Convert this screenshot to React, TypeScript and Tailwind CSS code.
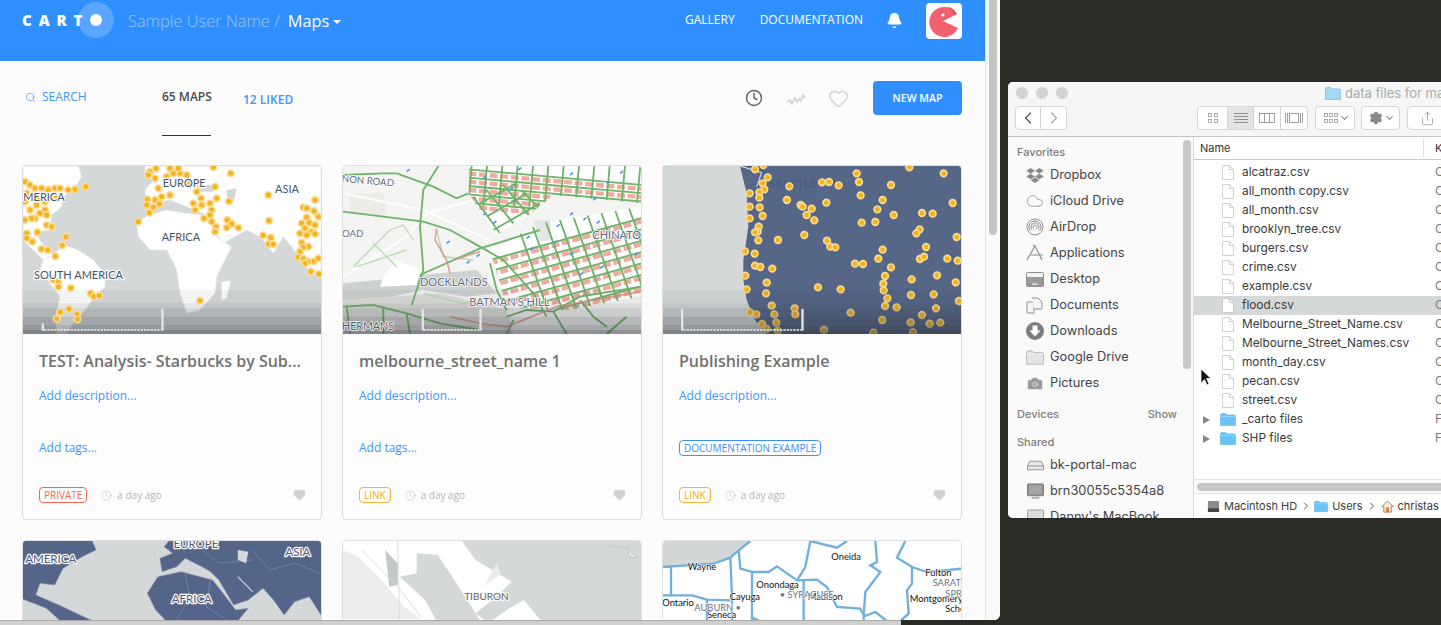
import { Bell, Camera, ChevronLeft, ChevronRight, Clock, Cloud, Heart, Search, Settings, Share } from "lucide-react";
import { FaDropbox } from "react-icons/fa";

const DOTS1 = "15,65 30,75 45,85 65,85 85,90 105,85 120,85 145,90 165,88 197,80 110,110 90,115 75,125 55,115 40,105 20,100 15,125 30,150 50,135 75,150 60,160 45,175 15,180 35,175 80,165 80,195 95,200 20,220 52,217 20,235 37,245 64,267 83,270 138,230 127,256 106,289 100,360 115,365 115,380 152,384 212,400 222,410 238,407 121,457 147,447 171,463 110,476 172,478 355,185 540,422 390,35 408,25 405,55 415,85 385,45 440,50 460,40 480,40 500,45 475,25 450,25 580,22 632,40 510,70 530,95 585,80 425,110 450,105 405,120 382,118 380,135 400,142 418,132 388,158 520,130 543,115 545,135 570,130 590,115 575,150 525,150 570,165 552,175 575,185 588,200 585,215 622,180 635,192 620,203 655,203 627,124 745,105 747,182 729,226 752,233 746,252 760,253 885,120 850,142 860,145 882,153 895,170 860,172 845,190 868,188 855,205 885,195 875,215 840,220 860,225 845,248 885,222 865,260 850,262 840,275 835,292 850,296 865,305 882,304 855,310 872,335 897,342 895,295";
const DOTS3 = "300,28 325,15 338,52 323,70 328,88 313,97 313,113 284,100 403,79 501,67 522,66 551,76 605,40 612,66 708,75 763,22 866,40 617,106 396,120 437,135 443,140 470,146 455,165 478,181 514,128 683,120 667,148 716,165 801,159 833,161 893,129 620,188 661,186 284,140 314,142 323,168 284,175 311,200 308,215 300,217 310,241 369,240 448,225 794,208 784,220 905,231 516,242 526,260 541,262 813,261 683,269 270,274 299,281 670,296 795,297 807,290 877,296 908,302 300,317 316,321 352,326 600,311 624,312 708,322 690,348 271,347 685,371 770,358 846,346 902,367 335,368 275,388 333,400 489,382 557,388 686,391 768,405 836,403 697,415 912,423 350,437 690,438 725,442 843,445 419,445 421,463 285,457 304,463 358,463 587,458 801,465 682,480 767,487 824,491 856,488 364,488 321,492 335,507 368,512 507,509 655,518 774,517";

function pairs(s: string) {
  return s.split(" ").map((p) => p.split(",").map(Number));
}

// zoomed crop of the bottom row was 2.376x wide, 3x high: back to page pixels
function bottomRow(s: string) {
  return pairs(s)
    .map(([x, y]) => `${(x / 2.376).toFixed(1)},${(530 + y / 3).toFixed(1)}`)
    .join(" ");
}

function Dots({ list, r = 10 }: { list: string; r?: number }) {
  return (
    <>
      {pairs(list).map(([x, y], i) => (
        <circle key={i} cx={x} cy={y} r={r} fill="#f4b41f" stroke="#fbdc97" strokeWidth="5" />
      ))}
    </>
  );
}

function Bands({ x, w }: { x: number; w: number }) {
  const bands = [
    [390, 40, 0.05],
    [430, 15, 0.12],
    [445, 25, 0.2],
    [470, 25, 0.3],
    [495, 15, 0.38],
    [510, 14, 0.5],
  ];
  return (
    <>
      {bands.map(([y, h, o]) => (
        <rect key={y} x={x} y={y} width={w} height={h} fill="#2a2f35" opacity={o} />
      ))}
    </>
  );
}

function Range({ a, b, top = 447 }: { a: number; b: number; top?: number }) {
  return (
    <>
      <rect x={a - 7} y={top} width="7" height={512 - top} fill="#e4e4e4" />
      <rect x={b} y="447" width="7" height="65" fill="#e4e4e4" />
      <line x1={a} y1="510" x2={b} y2="510" stroke="#eee" strokeWidth="4" strokeDasharray="7 3" />
    </>
  );
}

function MapLabel({ x, y, size = 33, children, color = "#465367", w = 7 }: { x: number; y: number; size?: number; children: string; color?: string; w?: number }) {
  return (
    <text x={x} y={y} fontSize={size} fontFamily="Lato, sans-serif" fill={color} stroke="#fff" strokeWidth={w} paintOrder="stroke" strokeLinejoin="round">
      {children}
    </text>
  );
}

function WorldMap() {
  return (
    <svg viewBox="9 18 894 504" className="block h-full w-full">
      <rect x="0" y="0" width="920" height="540" fill="#d4d8d8" />
      <g fill="#fff" stroke="#e3e5e5" strokeWidth="2">
        <polygon points="9,18 175,18 185,50 165,85 130,110 125,140 95,165 90,210 50,215 60,240 80,270 100,285 70,300 9,240" />
        <polygon points="100,285 130,255 175,270 220,300 255,340 255,380 225,410 195,450 160,490 140,522 110,522 105,470 120,410 90,370 60,330 70,300" />
        <polygon points="350,190 385,165 440,150 500,160 560,165 590,230 635,260 610,310 590,350 585,400 540,450 500,460 480,400 470,330 440,270 390,270 355,230" />
        <polygon points="375,18 903,18 903,350 870,340 830,280 790,230 760,280 720,230 680,210 610,250 580,210 570,170 500,140 450,120 380,135 375,90 400,60 375,40" />
        <polygon points="605,365 632,362 620,415 605,420" />
      </g>
      <polygon points="620,90 650,85 640,130 622,125" fill="#d4d8d8" />
      <polygon points="530,75 590,75 580,95 535,95" fill="#d4d8d8" />
      <Bands x={0} w={920} />
      <Dots list={DOTS1} />
      <MapLabel x={428} y={80}>EUROPE</MapLabel>
      <MapLabel x={765} y={98}>ASIA</MapLabel>
      <MapLabel x={425} y={242}>AFRICA</MapLabel>
      <MapLabel x={10} y={122}>MERICA</MapLabel>
      <MapLabel x={42} y={357}>SOUTH AMERICA</MapLabel>
      <Range a={72} b={424} top={490} />
    </svg>
  );
}

function StreetMap() {
  const across = [];
  for (let y0 = 300; y0 <= 640; y0 += 34) across.push([450, y0, 920, y0 - 130]);
  const down = [];
  for (let x0 = 510; x0 <= 930; x0 += 44) down.push([x0, 130, x0 + 120, 470]);
  const north = [];
  for (let y0 = 28; y0 <= 130; y0 += 25) north.push([385, y0, 920, y0 + 48]);
  const northDown = [];
  for (let x0 = 390; x0 <= 900; x0 += 46) northDown.push([x0 + 5, 18, x0 - 6, 140]);
  const diag = [
    [420, 130, 530, 70], [440, 170, 560, 100], [460, 210, 600, 130], [400, 110, 480, 220],
    [440, 90, 520, 190], [490, 75, 570, 170], [545, 90, 610, 160], [480, 235, 640, 150],
  ];
  const roads = [
    "9,155 250,185 330,210 420,260 490,300 580,400 620,470",
    "170,40 280,80 350,115 385,100",
    "295,18 250,90 240,200 250,330 215,435",
    "240,345 420,265 600,210",
    "450,310 470,390 500,450",
    "9,440 100,435 200,460 300,490 420,510",
    "20,440 30,522", "130,440 130,522", "200,460 210,522",
    "500,470 560,450 640,455 720,410 903,380",
    "720,420 760,470 800,500", "860,470 800,522", "500,522 520,480",
    "9,45 130,40 170,40", "640,455 680,522",
  ];
  const lightRoads = [
    "40,320 150,210 190,195 220,240", "100,250 170,320", "50,320 200,270",
    "250,400 370,430 420,420", "290,210 310,290 400,300",
  ];
  const blue = [
    "200,35", "430,55", "510,90", "535,30", "690,45", "800,70", "840,40", "430,165", "460,190", "520,125", "560,235",
    "690,165", "730,180", "770,190", "650,200", "320,250", "380,310", "410,290", "690,285", "720,345", "780,325", "570,270", "885,285", "760,120", "640,250",
  ];
  return (
    <svg viewBox="9 18 894 504" className="block h-full w-full">
      <rect x="0" y="0" width="920" height="540" fill="#f4f4f2" />
      <polygon points="30,100 130,100 140,170 30,160" fill="#ebebe8" />
      <polygon points="115,360 240,345 410,330 470,400 380,410 250,390 9,440 9,370" fill="#cdd1d1" />
      <polygon points="130,350 170,300 240,330 230,375 120,380" fill="#fff" />
      <polygon points="9,420 300,400 500,450 520,522 9,522" fill="#dcdcda" />
      <g fill="none" stroke="#fff" strokeWidth="6">
        <polyline points="9,100 250,150 450,240 520,400" />
        <polyline points="9,350 200,230 260,160 400,120" />
      </g>
      <polygon points="385,18 903,18 903,130 640,105 560,170 470,225 385,100" fill="#fff" />
      <polygon points="450,270 600,190 903,140 903,410 680,450 500,440" fill="#fff" />
      <clipPath id="cbd">
        <polygon points="450,270 600,190 903,140 903,410 680,450 500,440" />
      </clipPath>
      <clipPath id="north">
        <polygon points="385,18 903,18 903,130 640,105 560,170 470,225 385,100" />
      </clipPath>
      <g stroke="#f0aaa0" strokeWidth="13" strokeDasharray="24 8">
        <g clipPath="url(#north)">
          {north.map(([a, b, c, d], i) => (
            <line key={i} x1={a} y1={b + 12} x2={c} y2={d + 12} />
          ))}
        </g>
        <g clipPath="url(#cbd)">
          {across.map(([a, b, c, d], i) => (
            <line key={i} x1={a} y1={b + 10} x2={c} y2={d + 10} />
          ))}
        </g>
      </g>
      <polygon points="580,180 630,180 635,240 600,245" fill="#e4e6e6" />
      <g stroke="#6db368" strokeWidth="5.5">
        <g clipPath="url(#cbd)">
          {across.concat(down).map(([a, b, c, d], i) => (
            <line key={i} x1={a} y1={b} x2={c} y2={d} />
          ))}
        </g>
        <g clipPath="url(#north)">
          {north.concat(northDown, diag).map(([a, b, c, d], i) => (
            <line key={i} x1={a} y1={b} x2={c} y2={d} />
          ))}
        </g>
      </g>
      <g fill="none" stroke="#b9d9ae" strokeWidth="4">
        {lightRoads.map((p) => (
          <polyline key={p} points={p} />
        ))}
      </g>
      <g fill="none" stroke="#6db368" strokeWidth="5.5">
        {roads.map((p) => (
          <polyline key={p} points={p} />
        ))}
      </g>
      <g fill="none" stroke="#d98f84" strokeWidth="5" opacity="0.8">
        <polyline points="330,470 420,490 500,500 650,440 903,395" />
        <polyline points="290,205 285,240 320,300 330,340" />
        <polyline points="340,300 420,275" />
      </g>
      <g stroke="#4f97db" strokeWidth="5">
        {pairs(blue.join(" ")).map(([x, y]) => (
          <line key={`${x}-${y}`} x1={x} y1={y} x2={x + 9} y2={y - 7} />
        ))}
      </g>
      <Bands x={0} w={920} />
      <g transform="rotate(5 10 50)">
        <MapLabel x={6} y={66} size={29} color="#5e6a7a" w={5}>NON ROAD</MapLabel>
      </g>
      <MapLabel x={6} y={230} size={29} color="#5e6a7a" w={5}>OAD</MapLabel>
      <MapLabel x={757} y={238} size={33} color="#5e6a7a" w={5}>CHINATOWN</MapLabel>
      <MapLabel x={240} y={378} size={33} color="#5e6a7a" w={5}>DOCKLANDS</MapLabel>
      <MapLabel x={388} y={438} size={33} color="#5e6a7a" w={5}>BATMAN'S HILL</MapLabel>
      <MapLabel x={6} y={510} size={32} color="#4d5664" w={4}>HERMANS</MapLabel>
      <Range a={252} b={418} />
    </svg>
  );
}

function PointsMap() {
  return (
    <svg viewBox="24 18 894 504" className="block h-full w-full">
      <rect x="0" y="0" width="940" height="540" fill="#566686" />
      <polygon points="0,0 255,18 275,100 280,200 265,300 265,360 275,420 300,480 340,530 0,530" fill="#d5d9d9" />
      <polyline points="255,18 320,38 305,80" fill="none" stroke="#eef" strokeWidth="3" />
      <text x={345} y={80} fontSize="27" fontFamily="Lato, sans-serif" fill="#44557f" letterSpacing="5">SEATTLE</text>
      <Dots list={DOTS3} />
      <Bands x={0} w={940} />
      <Range a={85} b={439} />
    </svg>
  );
}

function DarkWorldMap() {
  const label = (x: number, y: number, t: string) => (
    <text x={x / 2.376} y={530 + y / 3} fontSize="11.5" fontFamily="Lato, sans-serif" fill="#4c5a78" stroke="#fff" strokeWidth="2.5" paintOrder="stroke" strokeLinejoin="round">
      {t}
    </text>
  );
  return (
    <svg viewBox="23 541 298 168" className="block h-full w-full">
      <rect x="0" y="500" width="400" height="240" fill="#d4d8d8" />
      <g fill="#55658a" stroke="#8794ad" strokeWidth="0.6">
        <polygon points={bottomRow("40,20 215,20 228,60 195,80 150,115 130,165 95,160 85,195 140,225 232,280 150,280 110,235 40,200")} />
        <polygon points={bottomRow("385,125 380,85 410,70 390,50 410,20 775,20 775,280 735,200 700,215 675,255 650,210 625,175 590,210 555,225 520,150 500,125 480,110 440,85 420,110")} />
        <polygon points={bottomRow("350,190 375,140 430,125 505,150 530,190 560,240 590,235 560,280 400,280 370,240")} />
      </g>
      <g fill="none" stroke="#8f9cb5" strokeWidth="0.5">
        <polyline points={bottomRow("440,130 450,200 420,270")} />
        <polyline points={bottomRow("500,150 490,230 540,270")} />
        <polyline points={bottomRow("600,60 640,120 700,100 760,130")} />
        <polyline points={bottomRow("480,60 520,100 600,90")} />
      </g>
      <polyline points={bottomRow("565,140 600,185")} fill="none" stroke="#d4d8d8" strokeWidth="1.2" />
      <polygon points={bottomRow("565,60 590,65 585,100 565,90")} fill="#d4d8d8" />
      {label(60, 100, "AMERICA")}
      {label(412, 55, "EUROPE")}
      {label(678, 78, "ASIA")}
      {label(408, 220, "AFRICA")}
    </svg>
  );
}

function CoastMap() {
  return (
    <svg viewBox="343 541 298 168" className="block h-full w-full">
      <rect x="300" y="500" width="400" height="240" fill="#fff" />
      <polygon points={bottomRow("815,60 850,80 900,140 960,230 1000,268 815,268")} fill="#ececea" />
      <polygon points={bottomRow("1090,20 1540,20 1540,280 1290,280 1245,210 1210,235 1160,280 1130,250 1180,200 1215,155 1130,90")} fill="#d4d8d8" />
      <polygon points={bottomRow("990,70 1040,75 1100,190 1145,280 1040,280 1010,210 950,140 990,130")} fill="#d4d8d8" />
      <polygon points={bottomRow("915,60 945,100 945,165 925,170")} fill="#c3c8c9" />
      <polygon points={bottomRow("1490,55 1515,85 1495,80")} fill="#e8e9e9" stroke="#aaa" strokeWidth="0.5" />
      <polyline points={bottomRow("1440,47 1490,55")} fill="none" stroke="#b5b9b9" strokeWidth="0.5" />
      <polygon points={bottomRow("1150,170 1180,100 1190,130")} fill="#ececea" />
      <polyline points={bottomRow("945,32 950,280")} fill="none" stroke="#dcdcdc" strokeWidth="1" />
      <polyline points={bottomRow("860,60 945,170 1000,260")} fill="none" stroke="#dcdcdc" strokeWidth="1" />
      <text x={1103 / 2.376} y={530 + 210 / 3} fontSize="10" fontFamily="Lato, sans-serif" fill="#56606e" stroke="#fff" strokeWidth="2" paintOrder="stroke">TIBURON</text>
    </svg>
  );
}

function CountyMap() {
  const lines = [
    "38,110 110,105 190,100 240,82 265,60 300,32",
    "62,105 62,195", "38,195 125,195 170,208 240,210",
    "240,82 245,200 245,280", "265,60 270,115 305,125 305,280",
    "305,125 355,125 380,108 440,150 500,148 530,170 560,230 630,235 640,255 640,280",
    "460,150 460,280", "465,110 480,32", "440,150 465,110", "480,32 560,52 590,32",
    "675,32 680,95 660,105 690,125 645,185 640,255",
    "765,32 740,82 785,110 785,160 770,180 775,250 740,280",
    "640,258 675,245 720,280", "785,110 830,125 934,115", "170,208 170,280", "305,262 345,280",
  ];
  const t = (x: number, y: number, s: string, c = "#111") => (
    <text x={x} y={y} fontSize="28" fontFamily="Lato, sans-serif" fill={c} stroke="#fff" strokeWidth="3" paintOrder="stroke">
      {s}
    </text>
  );
  return (
    <svg viewBox="38 32 894 504" className="block h-full w-full">
      <rect x="0" y="0" width="960" height="560" fill="#fff" />
      <polygon points="0,0 300,0 300,32 265,60 240,82 190,100 110,105 38,110 0,110" fill="#d3d7d7" />
      <g fill="none" stroke="#6fb0dc" strokeWidth="7">
        {lines.map((p) => (
          <polyline key={p} points={p} />
        ))}
      </g>
      {t(472, 208, "Madison")}
      {t(170, 262, "Seneca")}
      {t(112, 120, "Wayne")}
      {t(543, 88, "Oneida")}
      {t(825, 137, "Fulton")}
      {t(847, 168, "SARATOGA", "#6a7484")}
      {t(318, 173, "Onondaga")}
      {t(388, 202, "• SYRACUSE", "#6a7484")}
      {t(238, 208, "Cayuga")}
      {t(36, 228, "Ontario")}
      {t(132, 243, "AUBURN •", "#6a7484")}
      {t(778, 215, "Montgomery")}
      {t(885, 200, "SPR", "#6a7484")}
      {t(885, 246, "Schenectady")}
    </svg>
  );
}

function Card({ map, title, tag, privacy }: { map?: React.ReactNode; title?: string; tag?: string; privacy?: string }) {
  const badge =
    privacy === "PRIVATE"
      ? "border-[#ef6a55] text-[#ef6a55]"
      : "border-[#f2b632] text-[#f0ab10]";
  return (
    <div className="flex h-[355px] flex-col overflow-hidden rounded border border-[#dedede] bg-[#fdfdfd]">
      <div className="h-[168px] w-full shrink-0">{map}</div>
      {title && (
        <div className="flex flex-1 flex-col px-4 pb-4">
          <h3 className="mt-4 h-[22px] text-base leading-[22px] font-semibold whitespace-nowrap text-[#717171]">{title}</h3>
          <div className="mt-[15px] h-[18px] text-xs leading-[18px] text-[#3d95ff]">Add description...</div>
          {tag ? (
            <div className="mt-[35px] flex h-4">
              <span className="rounded-sm border border-[#3d8fff] px-1 text-[10px] leading-[14px] font-medium text-[#3d8fff]">{tag}</span>
            </div>
          ) : (
            <div className="mt-[34px] h-[18px] text-xs leading-[18px] text-[#3d95ff]">Add tags...</div>
          )}
          <div className="mt-auto flex h-4 items-center">
            <span className={`rounded-sm border px-1 text-[10px] leading-[14px] font-medium ${badge}`}>{privacy}</span>
            <Clock className="ml-[14px] h-[11px] w-[11px] text-[#c4c4c4]" strokeWidth={1.5} />
            <span className="ml-[5px] text-[10px] text-[#b5b5b5]">a day ago</span>
            <Heart className="mt-[-2px] mr-[-1px] ml-auto h-[13px] w-[13px] fill-[#d2d2d2] text-[#d2d2d2]" />
          </div>
        </div>
      )}
    </div>
  );
}

function Pacman() {
  return (
    <svg viewBox="0 0 36 36" className="h-9 w-9">
      <path d="M31 11 A15 15 0 1 0 32 25 L17 18 Z" fill="#f0616d" />
      <path d="M21 3.6 A15 15 0 0 1 31 11 L28.5 12.3 A15 15 0 0 0 21 3.6 Z" fill="#d9505c" />
      <circle cx="17" cy="12" r="1.6" fill="#fff" />
    </svg>
  );
}

function Header() {
  return (
    <header className="flex h-[61px] items-start bg-[#308fff] text-white">
      <div className="relative mt-[13px] ml-[22px] flex h-[14px] w-[80px] items-center">
        <div className="absolute top-[-11px] left-[56px] h-9 w-9 rounded-full bg-white/20" />
        <span className="text-[15px] leading-none font-extrabold tracking-[0.46em]">CART</span>
        <div className="absolute top-[1px] left-[68px] h-3 w-3 rounded-full bg-white" />
      </div>
      <div className="mt-[10px] ml-[26px] flex h-[22px] items-center text-[16.4px] font-light">
        <span className="text-white/50">Sample User Name /</span>
        <span className="ml-2 font-normal">Maps</span>
        <span className="mt-[2px] ml-[4px] h-0 w-0 border-x-[4px] border-t-[4px] border-x-transparent border-t-white" />
      </div>
      <nav className="mt-[11px] ml-auto flex h-[18px] items-center text-xs font-medium">
        <span>GALLERY</span>
        <span className="ml-[25px]">DOCUMENTATION</span>
        <Bell className="ml-[23px] h-[17px] w-[17px] fill-white" strokeWidth={1.5} />
      </nav>
      <div className="mt-[3px] mr-[23px] ml-[23px] h-9 w-9 rounded-sm bg-white">
        <Pacman />
      </div>
    </header>
  );
}

function Toolbar() {
  return (
    <div className="flex h-[104px] items-start pr-[23px] pl-[25px] text-xs">
      <div className="mt-[27px] flex h-[18px] w-[137px] items-center font-medium text-[#3d95ff]">
        <Search className="h-[11px] w-[11px]" strokeWidth={1.5} />
        <span className="ml-[6px]">SEARCH</span>
      </div>
      <div className="mt-[27px] h-[48px] w-[49px] border-b border-[#333] text-center leading-[18px] font-semibold whitespace-nowrap text-[#4a4a4a]">65 MAPS</div>
      <div className="mt-[30px] ml-8 leading-[18px] font-semibold text-[#3d95ff]">12 LIKED</div>
      <div className="mt-5 ml-auto flex items-center">
        <Clock className="h-[18px] w-[18px] text-[#666]" strokeWidth={2} />
        <svg viewBox="0 0 20 12" fill="none" stroke="#d4d4d4" strokeWidth="1.8" className="mt-[3px] ml-[23px] h-3 w-5">
          <polyline points="1,8 4,6 6,10 9,4 11,8 13,5 15,7 17,1 19,4" />
        </svg>
        <Heart className="ml-[22px] h-[21px] w-[21px] text-[#d8d8d8]" strokeWidth={2} />
        <button className="ml-6 h-[34px] w-[89px] rounded-sm bg-[#308fff] text-[10.5px] font-semibold text-white">NEW MAP</button>
      </div>
    </div>
  );
}

const FILES = [
  "alcatraz.csv",
  "all_month copy.csv",
  "all_month.csv",
  "brooklyn_tree.csv",
  "burgers.csv",
  "crime.csv",
  "example.csv",
  "flood.csv",
  "Melbourne_Street_Name.csv",
  "Melbourne_Street_Names.csv",
  "month_day.csv",
  "pecan.csv",
  "street.csv",
];

function FolderIcon({ className, fill = "#69c3f7", stroke = "#4aa6dd", tab = "#9fdcfb" }: { className: string; fill?: string; stroke?: string; tab?: string }) {
  return (
    <svg viewBox="0 0 16 13" className={className}>
      <path d="M0.5 2 Q0.5 0.5 2 0.5 H5.5 L7 2 H14 Q15.5 2 15.5 3.5 V12.5 H0.5 Z" fill={fill} stroke={stroke} strokeWidth="0.5" />
      <rect x="0.5" y="3" width="15" height="0.8" fill={tab} />
    </svg>
  );
}

function DocIcon() {
  return (
    <svg viewBox="0 0 12 15" className="h-[15px] w-3" fill="#fff" stroke="#bdbdbd" strokeWidth="0.7">
      <path d="M0.5 0.5 H7.5 L11.5 4.5 V14.5 H0.5 Z" />
      <path d="M7.5 0.5 V4.5 H11.5" fill="none" />
    </svg>
  );
}

function FileRow({ name, selected }: { name: string; selected?: boolean }) {
  return (
    <div className={`flex h-[19px] items-center ${selected ? "bg-[#d5d8d9]" : ""}`}>
      <div className="flex w-12 shrink-0 items-center pl-[28px]">
        <DocIcon />
      </div>
      <span className="w-[193px] shrink-0 whitespace-nowrap">{name}</span>
      <span className="text-[#777]">C</span>
    </div>
  );
}

function FolderRow({ name }: { name: string }) {
  return (
    <div className="flex h-[19px] items-center">
      <div className="flex w-12 shrink-0 items-center pl-[9px]">
        <span className="h-0 w-0 border-y-[4px] border-l-[7px] border-y-transparent border-l-[#888]" />
        <FolderIcon className="ml-[10px] h-[13px] w-4" />
      </div>
      <span className="w-[193px] shrink-0">{name}</span>
      <span className="text-[#777]">F</span>
    </div>
  );
}

function SideRow({ icon, label }: { icon: React.ReactNode; label: string }) {
  return (
    <div className="flex h-[26px] items-center pl-[18px]">
      <div className="flex w-[18px] items-center justify-center text-[#8b8b8b]">{icon}</div>
      <span className="ml-[6px] whitespace-nowrap">{label}</span>
    </div>
  );
}

const ICON_GREY = "#8f8f8f";
const sideIcons: Record<string, React.ReactNode> = {
  Dropbox: <FaDropbox className="h-[17px] w-[18px]" />,
  "iCloud Drive": <Cloud className="h-[18px] w-[18px]" strokeWidth={1} />,
  AirDrop: (
    <svg viewBox="0 0 18 18" className="h-[18px] w-[18px]" fill="none" stroke={ICON_GREY} strokeWidth="1">
      <circle cx="9" cy="9" r="8" />
      <path d="M4.5 13 A6 6 0 1 1 13.5 13 M6 11.5 A4 4 0 1 1 12 11.5 M7.5 10.5 A2 2 0 1 1 10.500 10.5" />
    </svg>
  ),
  Applications: (
    <svg viewBox="0 0 18 18" className="h-[18px] w-[18px]" fill="none" stroke={ICON_GREY} strokeWidth="1.2">
      <path d="M1 16 L9 2 L12 8 M5 11 H17 M12 8 L16 16 M9 2 L7 1" />
    </svg>
  ),
  Desktop: (
    <svg viewBox="0 0 18 15" className="h-[15px] w-[18px]">
      <rect x="0.500" y="0.500" width="17" height="14" rx="1" fill="#f5f5f5" stroke={ICON_GREY} />
      <rect x="1" y="5" width="16" height="9" fill="#9a9a9a" />
      <rect x="6" y="11.500" width="6" height="1" fill="#fff" />
    </svg>
  ),
  Documents: (
    <svg viewBox="0 0 18 17" className="h-[17px] w-[18px]" fill="#f5f5f5" stroke={ICON_GREY}>
      <path d="M1 5 H8 V16 H1 Z" />
      <path d="M6 1 H12 L16 5 V12 H8" />
    </svg>
  ),
  Downloads: (
    <svg viewBox="0 0 18 18" className="h-[18px] w-[18px]">
      <circle cx="9" cy="9" r="9" fill="#7d7d7d" />
      <path d="M6.500 3.500 H11.500 V8.500 H14.500 L9 14.500 L3.500 8.500 H6.500 Z" fill="#fff" />
    </svg>
  ),
  "Google Drive": <FolderIcon className="h-[15px] w-[18px]" fill="#e4e4e4" stroke={ICON_GREY} tab="#f2f2f2" />,
  Pictures: <Camera className="h-[19px] w-[19px] fill-[#9b9b9b] text-[#f0f0f0]" strokeWidth={1} />,
  "bk-portal-mac": (
    <svg viewBox="0 0 18 11" className="h-[11px] w-[17px]" fill="#e8e8e8" stroke={ICON_GREY}>
      <path d="M3 1 H15 L17.500 6 V10 H0.500 V6 Z" />
      <path d="M1 6 H17" />
    </svg>
  ),
  brn30055c5354a8: (
    <svg viewBox="0 0 18 17" className="h-[17px] w-[17px]">
      <rect x="0.500" y="0.500" width="17" height="12.500" rx="1" fill="#8e8e8e" stroke="#777" />
      <rect x="2" y="2" width="14" height="9.500" fill="#a5a5a5" />
      <rect x="5" y="14.500" width="8" height="1.500" fill="#999" />
    </svg>
  ),
  "Danny's MacBook": (
    <svg viewBox="0 0 18 17" className="h-[17px] w-[17px]">
      <rect x="0.500" y="0.500" width="17" height="12.500" rx="1" fill="#dcdcdc" stroke="#999" />
    </svg>
  ),
};

function Finder() {
  const favorites = ["Dropbox", "iCloud Drive", "AirDrop", "Applications", "Desktop", "Documents", "Downloads", "Google Drive", "Pictures"];
  const shared = ["bk-portal-mac", "brn30055c5354a8", "Danny's MacBook"];
  return (
    <div className="absolute top-[82px] left-[1008px] flex h-[436px] w-[433px] flex-col overflow-hidden rounded-l-[5px] bg-white font-['Inter',sans-serif] text-[11.85px] text-[#3a3a3a]">
      <div className="h-[55px] shrink-0 border-b border-[#c4c4c4] bg-[#f6f6f6]">
        <div className="flex h-[22px] items-center pl-[8px]">
          <span className="h-3 w-3 shrink-0 rounded-full bg-[#d2d2d2]" />
          <span className="ml-2 h-3 w-3 shrink-0 rounded-full bg-[#d2d2d2]" />
          <span className="ml-2 h-3 w-3 shrink-0 rounded-full bg-[#d2d2d2]" />
          <FolderIcon className="ml-[257px] h-[13px] w-4 shrink-0" fill="#a6d7f5" />
          <span className="mt-[1px] ml-1 text-[13px] whitespace-nowrap text-[#aaa]">data files for ma</span>
        </div>
        <div className="mt-[2px] flex h-[24px] items-stretch pl-[7px] text-[#7b7b7b]">
          <div className="flex w-[26px] shrink-0 items-center justify-center rounded-l border border-[#d4d4d4] bg-white">
            <ChevronLeft className="h-5 w-5 text-[#555]" strokeWidth={1.5} />
          </div>
          <div className="flex w-[26px] shrink-0 items-center justify-center rounded-r border border-l-0 border-[#d4d4d4] bg-white">
            <ChevronRight className="h-5 w-5 text-[#aaa]" strokeWidth={1.5} />
          </div>
          <div className="ml-[130px] flex w-[111px] shrink-0 rounded border border-[#d4d4d4] bg-white">
            <div className="flex w-[29px] items-center justify-center">
              <svg viewBox="0 0 10 10" className="h-[10px] w-[10px]" fill="none" stroke="#999" strokeWidth="0.8">
                <rect x="0.500" y="0.500" width="3" height="3" /><rect x="6.500" y="0.500" width="3" height="3" />
                <rect x="0.500" y="6.500" width="3" height="3" /><rect x="6.500" y="6.500" width="3" height="3" />
              </svg>
            </div>
            <div className="flex w-[27px] items-center justify-center border-x border-[#d4d4d4] bg-[#e4e4e4]">
              <svg viewBox="0 0 14 10" className="h-[10px] w-[14px]" stroke="#777" strokeWidth="0.8">
                <path d="M0 0.500 H14 M0 3.500 H14 M0 6.500 H14 M0 9.500 H14" />
              </svg>
            </div>
            <div className="flex w-[27px] items-center justify-center border-r border-[#d4d4d4]">
              <svg viewBox="0 0 16 10" className="h-[10px] w-4" fill="none" stroke="#888" strokeWidth="0.8">
                <rect x="0.500" y="0.500" width="15" height="9" /><path d="M5.500 0 V10 M10.500 0 V10" />
              </svg>
            </div>
            <div className="flex flex-1 items-center justify-center">
              <svg viewBox="0 0 18 10" className="h-[10px] w-[18px]" fill="none" stroke="#888" strokeWidth="0.8">
                <rect x="4.500" y="0.500" width="9" height="9" /><path d="M0.500 0 V10 M2.500 0 V10 M15.500 0 V10 M17.500 0 V10" />
              </svg>
            </div>
          </div>
          <div className="ml-[7px] flex w-[40px] shrink-0 items-center justify-center gap-1 rounded border border-[#d4d4d4] bg-white">
            <svg viewBox="0 0 14 11" className="h-[11px] w-[14px]" fill="none" stroke="#999" strokeWidth="0.8">
              <rect x="0.500" y="0.500" width="3" height="3" /><rect x="5.500" y="0.500" width="3" height="3" /><rect x="10.500" y="0.500" width="3" height="3" />
              <rect x="0.500" y="6.500" width="3" height="3" /><rect x="5.500" y="6.500" width="3" height="3" /><rect x="10.500" y="6.500" width="3" height="3" />
            </svg>
            <span className="mt-[-3px] h-[5px] w-[5px] rotate-45 border-r border-b border-[#888]" />
          </div>
          <div className="ml-[6px] flex w-[39px] shrink-0 items-center justify-center gap-1 rounded border border-[#d4d4d4] bg-white">
            <Settings className="h-[14px] w-[14px] fill-[#888] text-[#888]" />
            <span className="mt-[-3px] h-[5px] w-[5px] rotate-45 border-r border-b border-[#888]" />
          </div>
          <div className="ml-[7px] flex w-[40px] shrink-0 items-center justify-center rounded border border-[#d4d4d4] bg-white">
            <Share className="h-[15px] w-[15px]" strokeWidth={1} />
          </div>
        </div>
      </div>
      <div className="flex min-h-0 flex-1">
        <aside className="relative w-[186px] shrink-0 overflow-hidden border-r border-[#d8d8d8] bg-[#fafafa] text-[12.8px] leading-none text-[#444]">
          <div className="mt-[8px] ml-[9px] h-[14px] text-[11px] leading-[14px] font-medium text-[#7d7d7d]">Favorites</div>
          <div className="mt-[3px]">
            {favorites.map((f) => (
              <SideRow key={f} label={f} icon={sideIcons[f]} />
            ))}
          </div>
          <div className="mt-[11px] flex h-[14px] items-center justify-between pr-[16px] pl-[9px] text-[11px] font-medium text-[#7d7d7d]">
            <span>Devices</span>
            <span>Show</span>
          </div>
          <div className="mt-[14px] ml-[9px] h-[14px] text-[11px] leading-[14px] font-medium text-[#7d7d7d]">Shared</div>
          <div className="mt-[3px]">
            {shared.map((f) => (
              <SideRow key={f} label={f} icon={sideIcons[f]} />
            ))}
          </div>
          <div className="absolute top-[3px] right-[2px] h-[229px] w-2 rounded-full bg-[#c8c8c8]" />
        </aside>
        <div className="flex min-w-0 flex-1 flex-col">
          <div className="flex h-[23px] shrink-0 items-center border-b border-[#c9c9c9] pl-[6px] text-[11px] text-[#333]">
            <span className="w-[223px] shrink-0">Name</span>
            <span className="h-[18px] border-l border-[#ddd] pl-[11px] leading-[18px]">Kind</span>
          </div>
          <div className="flex-1 overflow-hidden pt-[3px]">
            {FILES.map((f) => (
              <FileRow key={f} name={f} selected={f === "flood.csv"} />
            ))}
            <FolderRow name="_carto files" />
            <FolderRow name="SHP files" />
          </div>
          <div className="flex h-[15px] shrink-0 items-center border-y border-[#e4e4e4] bg-[#fafafa] pl-[3px]">
            <div className="h-2 flex-1 rounded-l-full bg-[#c6c6c6]" />
          </div>
          <div className="flex h-[24px] shrink-0 items-center pl-[13px] text-[11px] whitespace-nowrap">
            <svg viewBox="0 0 14 14" className="h-[13px] w-[13px] shrink-0">
              <rect x="1" y="1" width="12" height="12" rx="1" fill="#8a8a8a" />
              <rect x="1" y="9" width="12" height="4" fill="#444" />
            </svg>
            <span className="ml-[4px]">Macintosh HD</span>
            <ChevronRight className="ml-[3px] h-3 w-3 shrink-0 text-[#555]" />
            <FolderIcon className="ml-[2px] h-[13px] w-[14px] shrink-0" />
            <span className="ml-[4px]">Users</span>
            <ChevronRight className="ml-[3px] h-3 w-3 shrink-0 text-[#555]" />
            <svg viewBox="0 0 14 14" className="ml-[3px] h-[13px] w-[13px] shrink-0">
              <path d="M7 1 L1 7 H3 V13 H11 V7 H13 Z" fill="#eee" stroke="#b9753b" strokeWidth="1" />
              <rect x="5.500" y="8" width="3" height="5" fill="#e07b24" />
            </svg>
            <span className="ml-[4px]">christas</span>
          </div>
        </div>
      </div>
    </div>
  );
}

export default function App() {
  return (
    <div className="relative h-[625px] w-[1441px] overflow-hidden bg-[#2b2b26] font-['Open_Sans',sans-serif]">
      <div className="flex h-[620px] w-[1000px] overflow-hidden rounded-br-md bg-[#fcfcfc]">
        <main className="w-[985px] shrink-0">
          <Header />
          <Toolbar />
          <div className="grid grid-cols-[repeat(3,300px)] gap-5 pl-[22px]">
            <Card map={<WorldMap />} title="TEST: Analysis- Starbucks by Sub..." privacy="PRIVATE" />
            <Card map={<StreetMap />} title="melbourne_street_name 1" privacy="LINK" />
            <Card map={<PointsMap />} title="Publishing Example" tag="DOCUMENTATION EXAMPLE" privacy="LINK" />
            <Card map={<DarkWorldMap />} />
            <Card map={<CoastMap />} />
            <Card map={<CountyMap />} />
          </div>
        </main>
        <div className="w-[15px] shrink-0 border-l border-[#e2e2e2] bg-[#fafafa] pt-0 pl-[3px]">
          <div className="h-[235px] w-2 rounded-b-full bg-[#c4c4c4]" />
        </div>
      </div>
      <div className="h-[5px] w-[901px] border-t border-[#a9a9a9] bg-[#d0d0d0]" />
      <Finder />
      <svg viewBox="0 0 12 18" className="absolute top-[368px] left-[1200px] h-[18px] w-3">
        <path d="M1 1 V15 L4.500 11.500 L7 17 L9 16 L6.500 10.500 H11 Z" fill="#111" stroke="#fff" strokeWidth="0.7" />
      </svg>
    </div>
  );
}
